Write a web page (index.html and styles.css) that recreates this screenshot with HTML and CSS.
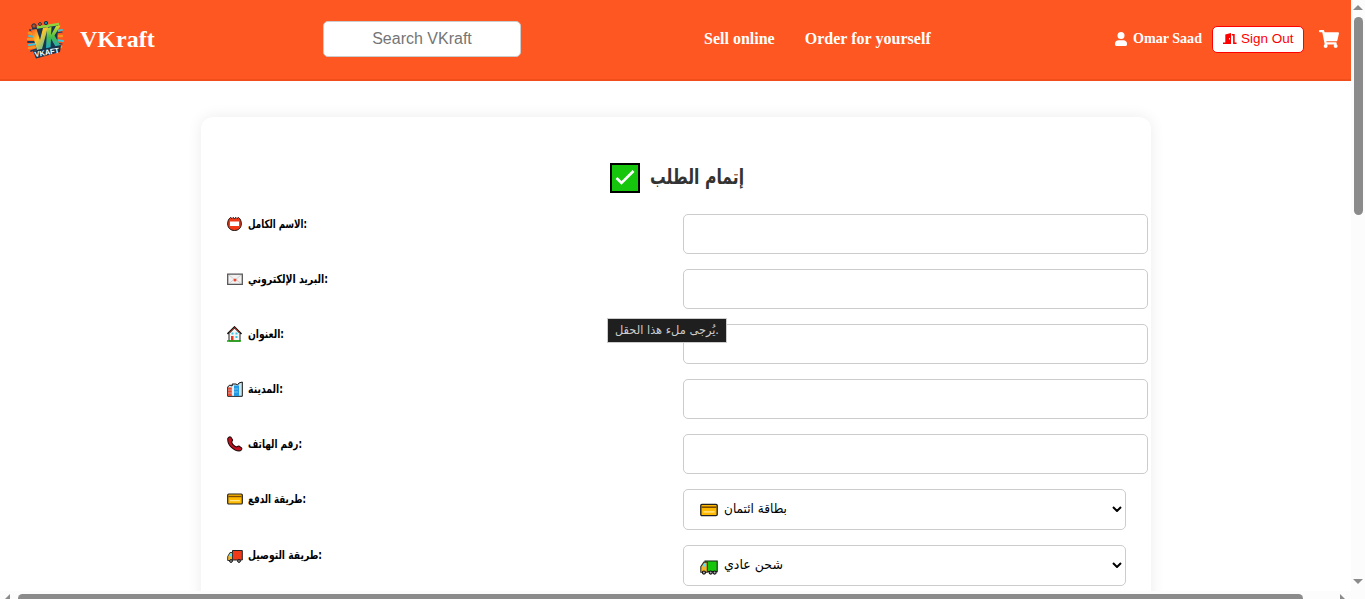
FILE: index.html
```html
<!DOCTYPE html>
<html lang="en">
<head>
<meta charset="utf-8">
<title>VKraft</title>
<link rel="stylesheet" href="styles.css">
</head>
<body>
<div class="window">
  <div class="page">
    <header class="topbar">
      <div class="brand">
        <svg class="logo" viewBox="0 0 38 38">
          <defs><linearGradient id="v" x1="0" y1="0" x2="1" y2="1"><stop offset="0" stop-color="#f5472a"/><stop offset=".45" stop-color="#ffc629"/><stop offset="1" stop-color="#28b9ca"/></linearGradient>
          <linearGradient id="k" x1="0" y1="0" x2="0" y2="1"><stop offset="0" stop-color="#d7df2d"/><stop offset=".5" stop-color="#48bb4c"/><stop offset="1" stop-color="#1aa9cf"/></linearGradient></defs>
          <g stroke-linecap="round" stroke-width="2.6">
            <path d="M3 12l7 2M2 18h8M3 27l7-1" stroke="#f7931e"/>
            <path d="M4 9l6 2M2 21h8M5 30l6-2" stroke="#19395a" stroke-width="1.800"/>
            <path d="M3 15l7 1M3 24l7-1M30 10l6-1M30 19l7 1" stroke="#38c6d9" stroke-width="2"/>
            <path d="M30 15h6M31 25l4 1" stroke="#f7931e"/>
            <path d="M30 22l6 1M30 12l6-1" stroke="#19395a" stroke-width="1.200"/>
          </g>
          <path d="M6 7l26-4-1 24-20 4z" fill="#173650"/>
          <path d="M11 6.500L33 3" stroke="#8fd33d" stroke-width="2.400"/>
          <circle cx="8" cy="5" r="2.200" fill="#b6502a" stroke="#17324a"/>
          <circle cx="14" cy="3" r="1.400" fill="#f26a21" stroke="#17324a"/>
          <circle cx="20" cy="2" r="1.700" fill="#1580a0" stroke="#17324a"/>
          <path d="M5 9l5.500-1 3.500 11 3-12 5-1-6 22-5 1z" fill="url(#v)"/>
          <path d="M21 7l4.500-1-.5 8 5-9 4.500-.5-6 10 6.500 11-5 1-5-9-.500 9.500-4.500 1z" fill="url(#k)"/>
          <path d="M7 30l28-6-1 7-24 6.500z" fill="#17324a"/>
          <text x="9" y="36" class="logo-text" transform="rotate(-10 9 36)" textLength="25">VKAFT</text>
        </svg>
        <span class="brand-name">VKraft</span>
      </div>
      <div class="search">Search VKraft</div>
      <nav class="links"><a>Sell online</a><a>Order for yourself</a></nav>
      <div class="account">
        <svg class="user-icon" viewBox="0 0 12 14"><circle cx="6" cy="3.500" r="3.500"/><path d="M0 12.500v-.8C0 9.800 1.600 8.300 3.500 8.300h5c1.900 0 3.500 1.500 3.500 3.400v.8c0 .9-.6 1.500-1.500 1.500h-9C.6 14 0 13.400 0 12.500z"/></svg>
        <span class="user-name">Omar Saad</span>
        <div class="signout">
          <svg class="door-icon" viewBox="0 0 14 12"><path fill-rule="evenodd" d="M0 9.500h2.300V1.500L8 0v11H0zM6 5v1.600h1V5z"/><path d="M8.700 1h3v8.500H13.500V11h-3.400V2.500H8.700z"/></svg>
          <span>Sign Out</span>
        </div>
        <svg class="cart-icon" viewBox="0 0 576 512"><path d="M528.100 301.300l47.300-208C578.800 78.300 567.400 64 552 64H159.200l-9.200-44.800C147.800 8 137.900 0 126.500 0H24C10.700 0 0 10.700 0 24v16c0 13.300 10.700 24 24 24h69.900l70.200 343.400C147.300 417.100 136 435.200 136 456c0 30.900 25.100 56 56 56s56-25.100 56-56c0-15.700-6.400-29.800-16.800-40h209.600C430.400 426.200 424 440.300 424 456c0 30.900 25.100 56 56 56s56-25.100 56-56c0-22.200-12.900-41.300-31.600-50.400l5.500-24.300c3.400-15-8-29.300-23.400-29.300H218.100l-6.500-32h293.100c11.200 0 20.900-7.800 23.400-18.700z"/></svg>
      </div>
    </header>

    <main class="card">
      <h1 class="title">
        <svg class="check" viewBox="0 0 30 30"><path d="M1 1h28v28H1z" fill="#16c60c" stroke="#000" stroke-width="2"/><path d="M6.500 15l5 5L23.500 8" fill="none" stroke="#fff" stroke-width="2.600"/></svg>
        <span class="title-text" dir="rtl">إتمام الطلب</span>
      </h1>
      <div class="row">
        <div class="label"><svg class="emoji" viewBox="0 0 16 16"><path d="M5 2.500L3.500 1.500C1.500 3 .7 5 .7 8c0 4 3 6.500 6.800 6.500s6.800-2.500 6.800-6.500c0-3-.8-5-2.800-6.500L10 2.500 9 1.500 7.500 2.500 6 1.500z" fill="#f03a17" stroke="#111"/><path d="M3 5.500h9v4.500H3z" fill="#fff"/></svg><span class="w58">الاسم الكامل:</span></div>
        <div class="field"></div>
      </div>
      <div class="row">
        <div class="label"><svg class="emoji" viewBox="0 0 16 16"><path d="M.7 3.200h14.600v10.100H.7z" fill="#f2f2f2" stroke="#555" stroke-width="1.300"/><path d="M2 4l6 5 6-5M2 12.500l5-4M14 12.500l-5-4" fill="none" stroke="#bbb" stroke-width=".6"/><circle cx="8" cy="9" r="1.500" fill="#f04a35"/></svg><span class="w79">البريد الإلكتروني:</span></div>
        <div class="field"></div>
      </div>
      <div class="row">
        <div class="label"><svg class="emoji" viewBox="0 0 16 16"><path d="M2 7.500L7.500 2 13 7.500V15H2z" fill="#f4f4f4" stroke="#222"/><path d="M.5 8L7.500 1 14.500 8" fill="none" stroke="#111" stroke-width="1.600"/><path d="M2 6.700l5.500-5 5.500 5" fill="none" stroke="#e73820" stroke-width=".7"/><path d="M4 10h2.500v5H4z" fill="#e73820"/><path d="M8.500 6.500h2v2h-2zM8.500 10h2v2h-2zM4.500 6.500h2v2h-2z" fill="#38c8e8"/><path d="M0 15h14" stroke="#16a60c" stroke-width="1.500"/></svg><span class="w36">العنوان:</span></div>
        <div class="field"></div>
      </div>
      <div class="row">
        <div class="label"><svg class="emoji" viewBox="0 0 16 16"><path d="M.7 15.300V6l2-2 2.500 1V3H9l1.500 1 1.500-2 3.300-1v14.300z" fill="#c9e8f4" stroke="#111"/><path d="M1 6.500h3.800V15H1z" fill="#e74830"/><path d="M5.300 5H7v9.500H5.300z" fill="#eee"/><path d="M7 4.500h5V15H7z" fill="#219ae5"/><path d="M7 8h4M7 11h4M1 9h4M1 12h4" stroke="#b6dff5" stroke-width=".6"/></svg><span class="w35">المدينة:</span></div>
        <div class="field"></div>
      </div>
      <div class="row">
        <div class="label"><svg class="emoji" viewBox="0 0 16 16"><path d="M.8 2.500C1.500 1 3 .5 3.800 1.200l1.700 2.600c.4.700-.7 1.500-.9 2.200.8 2.400 2.800 4.400 5 5 .8-.3 1.500-1.300 2.300-.9l2.600 1.700c.7.800.2 2.300-1.300 3C7 15.500.2 9 .8 2.500z" fill="#c50f1f" stroke="#25090b" stroke-width="1.100"/></svg><span class="w54">رقم الهاتف:</span></div>
        <div class="field"></div>
      </div>
      <div class="row row-select">
        <div class="label"><svg class="emoji" viewBox="0 0 16 16"><rect x=".7" y="3" width="14.600" height="10" rx="1" fill="#ffb900" stroke="#222" stroke-width="1.200"/><path d="M1.300 5.500h13.400" stroke="#7a4b00" stroke-width="1.400"/><path d="M3 9.700h10" stroke="#fff0b0" stroke-width="1"/></svg><span class="w57">طريقة الدفع:</span></div>
        <div class="select"><svg class="emoji big" viewBox="0 0 16 16"><rect x=".7" y="3" width="14.600" height="10" rx="1" fill="#ffb900" stroke="#222" stroke-width="1.200"/><path d="M1.300 5.500h13.400" stroke="#7a4b00" stroke-width="1.400"/><path d="M3 9.700h10" stroke="#fff0b0" stroke-width="1"/></svg><span class="opt w62" dir="rtl">بطاقة ائتمان</span><svg class="chev" viewBox="0 0 10 6"><path d="M1 1l4 4 4-4"/></svg></div>
      </div>
      <div class="row row-select">
        <div class="label"><svg class="emoji" viewBox="0 0 16 16"><path d="M5.500 3.500h9.800v9.500H5.500z" fill="#f03a17" stroke="#222"/><path d="M5.500 5.500H3L.7 9.500v4h4.800z" fill="#f7b52a" stroke="#333"/><path d="M4.500 6.500H3.300L2 9.500h2.500z" fill="#50e6ff"/><g fill="#aaa" stroke="#111"><circle cx="4" cy="14" r="1.400"/><circle cx="12" cy="14" r="1.400"/></g></svg><span class="w73">طريقة التوصيل:</span></div>
        <div class="select"><svg class="emoji big" viewBox="0 0 16 16"><path d="M4.500 3.500h10.800v9.500H4.500z" fill="#16c60c" stroke="#222"/><path d="M6.500 4.500H3.500L.7 8.500v5h5.800z" fill="#f7b52a" stroke="#333"/><path d="M4.500 5.700H3.600L2 8.500h2.500z" fill="#50e6ff"/><g fill="#aaa" stroke="#111"><circle cx="3.500" cy="13.800" r="1.400"/><circle cx="9.500" cy="13.800" r="1.400"/><circle cx="13" cy="13.800" r="1.400"/></g></svg><span class="opt w58" dir="rtl">شحن عادي</span><svg class="chev" viewBox="0 0 10 6"><path d="M1 1l4 4 4-4"/></svg></div>
      </div>
    </main>
    <div class="tooltip"><span>يُرجى ملء هذا الحقل.</span></div>
  </div>
  <div class="vscroll"><i class="arrow up"></i><div class="vthumb"></div><i class="arrow down"></i></div>
  <div class="hscroll"><i class="arrow left"></i><div class="hthumb"></div><i class="arrow right"></i></div>
</div>
<script src="fit.js"></script>
</body>
</html>
```
FILE: fit.js
```js
// Scale Arabic captions horizontally to the width their class asks for.
document.querySelectorAll('.label span, .opt, .title-text, .tooltip span').forEach(function (el) {
  var want = parseFloat(getComputedStyle(el).getPropertyValue('--w'));
  var have = el.getBoundingClientRect().width;
  if (want && have) {
    el.style.transform = 'scaleX(' + want / have + ')';
  }
});
```
FILE: styles.css
```css
* { box-sizing: border-box; }
body { margin: 0; background: #fff; overflow: hidden; font-family: "Liberation Serif", serif; }
.window { display: grid; grid-template: 591px 8px / 1351px 14px; width: 1365px; height: 599px; overflow: hidden; }
.page { position: relative; overflow: hidden; background: #fff; }
.topbar { display: flex; align-items: center; height: 81px; padding: 0 12px 2px 25px; background: #ff5722; border-bottom: 2px solid #f04e1b; color: #fff; }
.brand { display: flex; align-items: center; gap: 15px; width: 298px; }
.logo { width: 40px; height: 38px; margin-top: 2px; }
.logo-text { font: bold 7.5px "Liberation Sans", sans-serif; fill: #fff; }
.brand-name { font-size: 24px; font-weight: bold; line-height: 28px; }
.search { width: 198px; height: 36px; border: 1px solid #ccc; border-radius: 5px; background: #fff; color: #757575; font: 16px/34px "Liberation Sans", Arial, sans-serif; text-align: center; }
.links { display: flex; gap: 30px; margin-left: 183px; font-size: 16px; font-weight: bold; white-space: nowrap; }
.links a:last-child { letter-spacing: .03px; }
.account { display: flex; align-items: center; margin-left: auto; white-space: nowrap; }
.user-icon { width: 12px; height: 14px; fill: #fff; margin-right: 6px; }
.user-name { font-size: 14.100px; font-weight: bold; margin-right: 10px; }
.signout { display: flex; align-items: center; gap: 4px; width: 92px; height: 27px; margin: 1px 15px 0 0; padding: 0 0 1px 10px; border: 1px solid #f00; border-radius: 5px; background: #fff; color: #f00; font: 13.500px "Liberation Sans", Arial, sans-serif; }
.door-icon { width: 14px; height: 12px; fill: #f00; }
.cart-icon { width: 20px; height: 18px; fill: #fff; }
.card { width: 950px; height: 700px; margin: 36px 0 0 201px; padding: 44px 2px 0 26px; border-radius: 12px; background: #fff; box-shadow: 0 0 15px rgba(0,0,0,.08); }
.title { display: flex; align-items: center; height: 34px; margin: 0 0 19px 383px; gap: 10px; color: #333; }
.check { width: 30px; height: 30px; }
.title-text { --w: 94; display: inline-block; transform-origin: left; margin-top: -3px; font: bold 21px "DejaVu Sans", sans-serif; white-space: nowrap; }
.row { display: flex; height: 55px; }
.row-select { height: 56px; }
.label { display: flex; align-items: center; gap: 5px; width: 456px; height: 20px; font: bold 11.500px "DejaVu Sans", sans-serif; color: #000; }
.label span { display: inline-block; direction: ltr; transform-origin: left; white-space: nowrap; }
.emoji { width: 16px; height: 16px; flex: none; }
.field { width: 465px; height: 40px; border: 1px solid #ccc; border-radius: 5px; background: #fff; }
.select { display: flex; align-items: center; width: 443px; height: 41px; padding: 0 3px 0 16px; border: 1px solid #ccc; border-radius: 5px; background: #fff; }
.big { width: 18px; height: 18px; margin-right: 6px; }
.opt { display: inline-block; transform-origin: left; margin-top: -2px; font: 13px "DejaVu Sans", sans-serif; color: #000; white-space: nowrap; }
.chev { width: 10px; height: 6px; margin: -1px 0 0 auto; fill: none; stroke: #000; stroke-width: 2; }
.w35 { --w: 35; } .w36 { --w: 36; } .w54 { --w: 54; } .w57 { --w: 58; } .w58 { --w: 59; }
.w62 { --w: 63; } .w73 { --w: 74; } .w79 { --w: 80; }
.tooltip { position: absolute; left: 607px; top: 318px; width: 120px; height: 25px; padding-left: 7px; border: 1px solid #ccc; background: #1f1f1f; color: #ccc; font: 12px/23px "DejaVu Sans", sans-serif; }
.tooltip span { --w: 104; display: inline-block; direction: ltr; transform-origin: left; white-space: nowrap; }
.vscroll { grid-column: 2; grid-row: 1; display: flex; flex-direction: column; align-items: center; padding: 5px 0 7px; background: #fcfcfc; }
.vthumb { width: 9px; height: 198px; margin-top: 7px; border-radius: 5px; background: #8b8b8b; }
.arrow { display: block; width: 0; height: 0; border: 0 solid transparent; }
.up { border-width: 0 5px 5px; border-bottom-color: #8b8b8b; }
.down { border-width: 5px 5px 0; border-top-color: #8b8b8b; margin-top: auto; }
.hscroll { grid-column: 1 / 3; grid-row: 2; display: flex; align-items: flex-start; padding: 3px 0 0 5px; background: #fcfcfc; overflow: hidden; }
.hthumb { width: 1285px; height: 9px; margin-left: 8px; border-radius: 5px; background: #8b8b8b; flex: none; }
.left { border-width: 5px 5px 5px 0; border-right-color: #8b8b8b; }
.right { border-width: 5px 0 5px 5px; border-left-color: #8b8b8b; margin-left: 37px; }
```
